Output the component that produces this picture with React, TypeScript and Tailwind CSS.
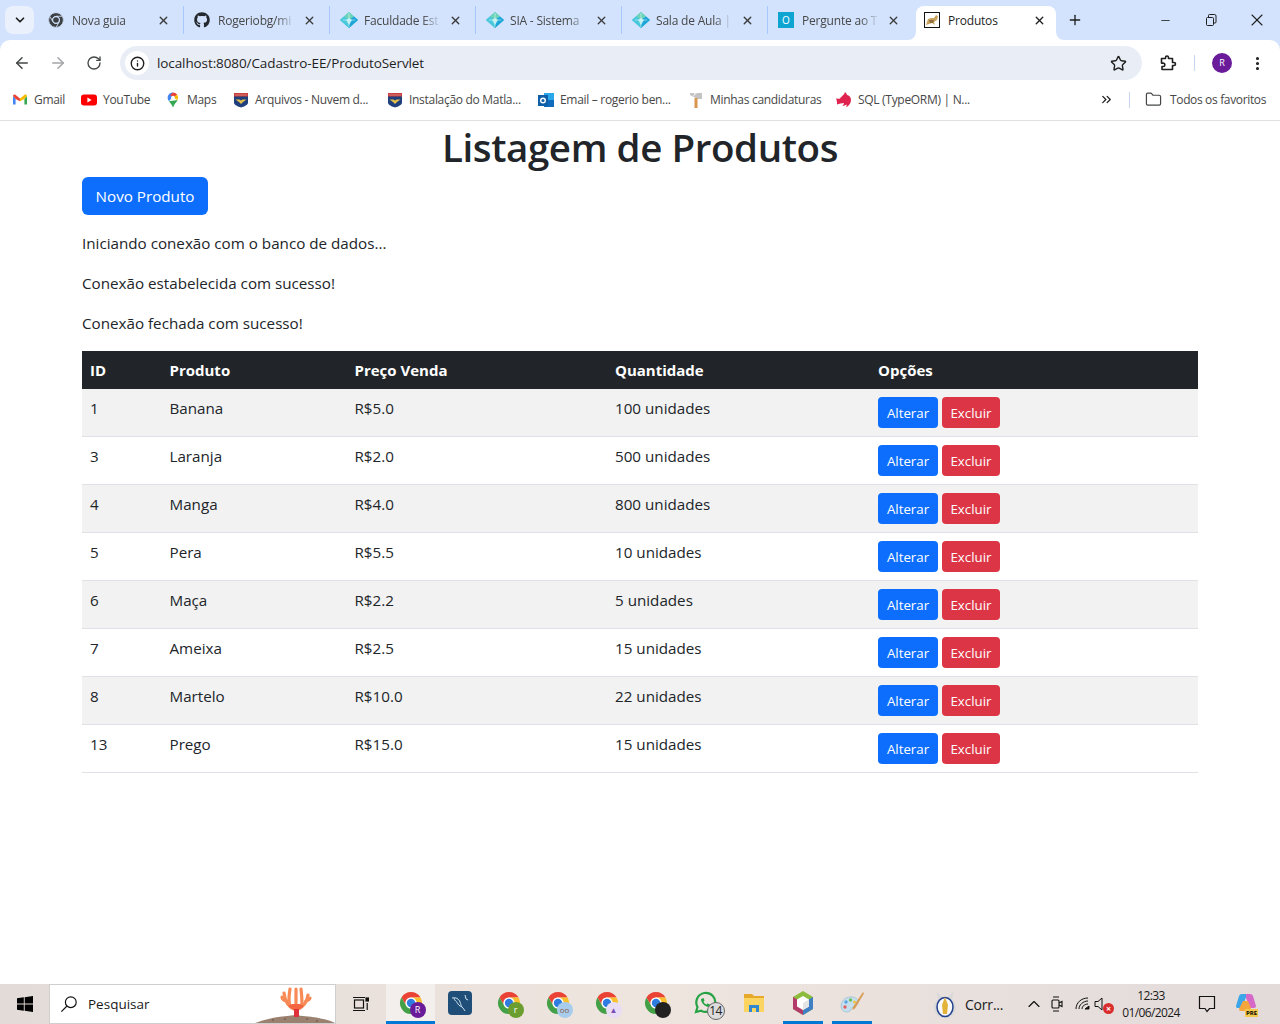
import { ArrowLeft, ArrowRight, ChevronDown, ChevronsRight, ChevronUp, EllipsisVertical, Folder, Info, Minus, Plus, RotateCw, Star, X } from "lucide-react";
import { FaGithub } from "react-icons/fa";
import type { ReactNode } from "react";

const ChromeLogo = ({ size = 16, gray = false }: { size?: number; gray?: boolean }) => (
  <svg width={size} height={size} viewBox="0 0 24 24">
    <g stroke={gray ? "#d3e3fd" : "none"} strokeWidth={gray ? 1 : 0}>
      <path d="M2.47 6.5A11 11 0 0 1 21.53 6.5H12A5.5 5.5 0 0 0 7.24 14.75Z" fill={gray ? "#3c4043" : "#ea4335"} />
      <path d="M21.53 6.5A11 11 0 0 1 12 23L16.76 14.75A5.5 5.5 0 0 0 12 6.5Z" fill={gray ? "#3c4043" : "#fbc02d"} />
      <path d="M12 23A11 11 0 0 1 2.47 6.5L7.24 14.75A5.5 5.5 0 0 0 16.76 14.75Z" fill={gray ? "#3c4043" : "#43a047"} />
    </g>
    <circle cx="12" cy="12" r="5.5" fill={gray ? "#d3e3fd" : "#fff"} />
    <circle cx="12" cy="12" r="4.2" fill={gray ? "#3c4043" : "#2f7de1"} />
  </svg>
);

const Diamond = () => (
  <svg width="18" height="16" viewBox="0 0 18 16">
    <path d="M9 0l9 8-9 8-9-8z" fill="#3fc4d6" />
    <path d="M9 0l5 4.500-5 3.500-5-3.500z" fill="#6fd3b8" />
    <path d="M9 8l5-3.500L18 8l-9 8z" fill="#1fa6d8" />
    <path d="M9 8 4 4.500 0 8l9 8z" fill="#48c8dc" />
    <path d="M6 8l3-2 3 2-3 5z" fill="#b5ecef" />
    <path d="M3 8h12M9 1v14" stroke="#e8fbfb" strokeWidth="0.500" />
  </svg>
);

const OBox = () => (
  <div className="flex h-4 w-4 items-center justify-center bg-[#0ea5d3] text-[10px] leading-none text-white">O</div>
);

const TomcatIcon = () => (
  <svg width="16" height="16" viewBox="0 0 16 16">
    <rect x="0.500" y="0.500" width="15" height="15" fill="#fff" stroke="#111" />
    <path d="M2 13l2-6 3-1 3 0 2-3 2 1-1 4-3 2 1 3-3-2-3 1z" fill="#c9a25e" />
    <path d="M5 8l5 0-1 3-3 0z" fill="#8f6f3a" />
  </svg>
);

const GmailIcon = () => (
  <svg width="16" height="16" viewBox="0 0 16 16">
    <path d="M1 4v8.500h2.600V7L1 4z" fill="#4285f4" />
    <path d="M12.400 12.500H15V4l-2.600 3z" fill="#34a853" />
    <path d="M1 4c0-1.300 1.500-2 2.400-1.200L8 6.600l-.1 2.600L3.600 7 1 4z" fill="#ea4335" />
    <path d="M15 4c0-1.300-1.500-2-2.400-1.200L8 6.600v2.600L12.400 7 15 4z" fill="#fbbc04" />
  </svg>
);

const YoutubeIcon = () => (
  <svg width="16" height="16" viewBox="0 0 16 16">
    <rect x="0" y="2.500" width="16" height="11" rx="3" fill="#f00" />
    <path d="M6.400 5.500v5L10.600 8z" fill="#fff" />
  </svg>
);

const MapsIcon = () => (
  <svg width="16" height="16" viewBox="0 0 16 16">
    <path d="M8 0.500a5.300 5.300 0 0 0-4 8.800L8 4.600z" fill="#4285f4" />
    <path d="M8 .5a5.300 5.300 0 0 1 4.100 1.900L9 6 5 3z" fill="#ea4335" />
    <path d="M12.100 2.400A5.300 5.300 0 0 1 12.600 8L8 5.800z" fill="#fbbc04" />
    <path d="M4 9.300 12.600 8C11.600 10.400 9 12 8 15.500 7.400 13.500 5.400 11 4 9.300z" fill="#34a853" />
    <circle cx="8" cy="5.600" r="1.900" fill="#fff" />
  </svg>
);

const ShieldIcon = () => (
  <svg width="16" height="16" viewBox="0 0 16 16">
    <path d="M1 1h14v9.500c0 2.500-4 4-7 5-3-1-7-2.500-7-5z" fill="#1f3f7d" />
    <rect x="1" y="1" width="14" height="3.500" fill="#c8403f" />
    <path d="M2.500 3h11" stroke="#f0d9d9" strokeWidth="0.800" strokeDasharray="1 1" />
    <path d="M2.500 7.500h4l1.500 1 1.500-1h4l-3.500 2.500L8 12 6 10z" fill="#e5c04b" />
  </svg>
);

const OutlookIcon = () => (
  <svg width="16" height="16" viewBox="0 0 16 16">
    <rect x="6" y="1" width="10" height="14" fill="#28a8ea" />
    <rect x="6" y="8" width="10" height="7" fill="#0f6cbd" />
    <rect x="0" y="3" width="10" height="11" fill="#0f5ea8" />
    <circle cx="5" cy="8.500" r="2.300" fill="none" stroke="#fff" strokeWidth="1.400" />
  </svg>
);

const HammerIcon = () => (
  <svg width="16" height="16" viewBox="0 0 16 16">
    <path d="M2 1h12v6H9.500L2 3z" fill="#c4c4c4" />
    <path d="M6 1h3L5 5z" fill="#e8e8e8" />
    <rect x="6.500" y="6" width="3" height="10" fill="#d9964e" />
  </svg>
);

const NestIcon = () => (
  <svg width="16" height="16" viewBox="0 0 16 16">
    <path d="M9 0c1 1 2 2 2 3 2 .4 4 2 4 5 0 3-2 6-5 7.500 .6-1 .8-2 .4-3-1 1-2.400 1.500-4 1 1-.6 1.500-1.500 1.500-2.500C6 11.600 3 11.400 1 12.500 1.500 9.500 0 8 .5 6 2 7 3 7 4 6.500 5 4.500 8 3.500 9 0z" fill="#e0234e" />
  </svg>
);

const RestoreIcon = () => (
  <svg width="12" height="12" viewBox="0 0 12 12" fill="none" stroke="#1f1f1f" strokeWidth="1">
    <rect x="1.500" y="3.500" width="7" height="8" rx="1" />
    <path d="M3.500 3.500V1.500a1 1 0 0 1 1-1h5a1.500 1.500 0 0 1 1.500 1.500v6a1 1 0 0 1-1 1H8.500" />
  </svg>
);

const PuzzleIcon = () => (
  <svg width="18" height="18" viewBox="0 0 18 18" fill="none" stroke="#1f1f1f" strokeWidth="1.600" strokeLinejoin="round">
    <path d="M2.500 4.500H6.500V3.500a1.500 1.500 0 0 1 3 0V4.500H13.500V8.500H15a1.500 1.500 0 0 1 0 3H13.500V15.500H3V12.500H4.200a1.700 1.700 0 0 0 0-3.400H2.500z" />
  </svg>
);

type TabData = { title: string; icon: ReactNode };

const tabs: TabData[] = [
  { title: "Nova guia", icon: <ChromeLogo gray /> },
  { title: "Rogeriobg/mi", icon: <FaGithub size={16} color="#24292f" /> },
  { title: "Faculdade Est", icon: <Diamond /> },
  { title: "SIA - Sistema", icon: <Diamond /> },
  { title: "Sala de Aula |", icon: <Diamond /> },
  { title: "Pergunte ao T", icon: <OBox /> },
];

const bookmarks = [
  { title: "Gmail", icon: <GmailIcon />, width: "w-[69px]" },
  { title: "YouTube", icon: <YoutubeIcon />, width: "w-[84px]" },
  { title: "Maps", icon: <MapsIcon />, width: "w-[68px]" },
  { title: "Arquivos - Nuvem d...", icon: <ShieldIcon />, width: "w-[154px]" },
  { title: "Instalação do Matla...", icon: <ShieldIcon />, width: "w-[151px]" },
  { title: "Email – rogerio ben...", icon: <OutlookIcon />, width: "w-[150px]" },
  { title: "Minhas candidaturas", icon: <HammerIcon />, width: "w-[148px]" },
  { title: "SQL (TypeORM) | N...", icon: <NestIcon />, width: "w-[150px]" },
];

const produtos = [
  { id: 1, nome: "Banana", preco: "R$5.0", qtd: "100 unidades" },
  { id: 3, nome: "Laranja", preco: "R$2.0", qtd: "500 unidades" },
  { id: 4, nome: "Manga", preco: "R$4.0", qtd: "800 unidades" },
  { id: 5, nome: "Pera", preco: "R$5.5", qtd: "10 unidades" },
  { id: 6, nome: "Maça", preco: "R$2.2", qtd: "5 unidades" },
  { id: 7, nome: "Ameixa", preco: "R$2.5", qtd: "15 unidades" },
  { id: 8, nome: "Martelo", preco: "R$10.0", qtd: "22 unidades" },
  { id: 13, nome: "Prego", preco: "R$15.0", qtd: "15 unidades" },
];

const TabStrip = () => (
  <div className="flex h-10 items-center bg-[#d3e3fd] pl-[5px]">
    <div className="mr-[3px] flex h-7 w-[29px] items-center justify-center rounded-lg bg-[#eaf1fd]">
      <ChevronDown size={14} strokeWidth={3} color="#1f1f1f" />
    </div>
    {tabs.map((tab, i) => (
      <div key={tab.title} className={`flex h-7 w-[146px] items-center ${i === 0 ? "pl-[11px]" : "border-l border-[#a8c7fa] pl-[10px]"}`}>
        <div className="flex w-6 shrink-0 items-center">{tab.icon}</div>
        <span className="w-[81px] overflow-hidden whitespace-pre pt-px text-[12px] tracking-[-0.2px] text-[#474747] [mask-image:linear-gradient(to_right,black_72%,transparent_95%)]">
          {tab.title}
        </span>
        <X size={13} strokeWidth={2.5} color="#3c3c3c" className="ml-[4px] shrink-0" />
      </div>
    ))}
    <div className="relative ml-[3px] mt-1.5 flex h-[34px] w-[140px] items-center self-start rounded-t-lg bg-white pb-1.5 pl-2">
      <svg className="absolute bottom-0 left-[-8px]" width="8" height="8" viewBox="0 0 8 8"><path d="M0 8a8 8 0 0 0 8-8v8z" fill="#fff" /></svg>
      <svg className="absolute bottom-0 right-[-8px]" width="8" height="8" viewBox="0 0 8 8"><path d="M8 8a8 8 0 0 1-8-8v8z" fill="#fff" /></svg>
      <div className="flex w-6 shrink-0 items-center"><TomcatIcon /></div>
      <span className="w-[85px] pt-px text-[12px] tracking-[-0.2px] text-[#1f1f1f]">Produtos</span>
      <X size={13} strokeWidth={2.5} color="#1f1f1f" className="shrink-0" />
    </div>
    <Plus size={16} strokeWidth={2} color="#1f1f1f" className="ml-[11px]" />
    <div className="ml-auto flex h-full">
      <div className="flex w-[46px] items-center justify-center"><Minus size={13} strokeWidth={1.5} color="#1f1f1f" /></div>
      <div className="flex w-[46px] items-center justify-center"><RestoreIcon /></div>
      <div className="flex w-[46px] items-center justify-center"><X size={20} strokeWidth={1.3} color="#1f1f1f" /></div>
    </div>
  </div>
);

const Toolbar = () => (
  <div className="bg-[#d3e3fd]">
    <div className="flex h-10 items-center rounded-t-[10px] bg-white pl-[13px] pt-1.5">
      <ArrowLeft size={18} strokeWidth={2} color="#444746" />
      <ArrowRight size={18} strokeWidth={2} color="#a3a5a6" className="ml-[18px]" />
      <RotateCw size={16} strokeWidth={2} color="#444746" className="ml-[19px]" />
      <div className="ml-[18px] flex h-[34px] w-[1022px] items-center rounded-full bg-[#e9eef6] pl-[5px]">
        <div className="flex h-6 w-6 items-center justify-center rounded-full bg-white">
          <Info size={15} strokeWidth={2.2} color="#1f1f1f" />
        </div>
        <span className="ml-2 text-[13.5px] tracking-[-0.1px] text-[#1f1f1f]">
          localhost:8080/Cadastro-EE/ProdutoServlet
        </span>
        <Star size={17} strokeWidth={2} color="#1f1f1f" className="ml-auto mr-[15px]" />
      </div>
      <div className="ml-[17px]"><PuzzleIcon /></div>
      <div className="ml-[17px] h-4 w-px bg-[#c7d7f0]" />
      <div className="ml-[17px] flex h-5 w-5 items-center justify-center rounded-full bg-[#6a1b9a] text-[9px] text-white">R</div>
      <EllipsisVertical size={17} strokeWidth={2.4} color="#1f1f1f" className="ml-[17px]" />
    </div>
  </div>
);

const BookmarksBar = () => (
  <div className="flex h-[41px] items-center border-b border-[#e0e0e0] bg-white pb-px pl-3 text-[12px] tracking-[-0.3px] text-[#474747]">
    {bookmarks.map((b) => (
      <div key={b.title} className={`flex items-center ${b.width}`}>
        <div className="flex w-[22px] shrink-0">{b.icon}</div>
        <span className="whitespace-nowrap">{b.title}</span>
      </div>
    ))}
    <ChevronsRight size={15} strokeWidth={2} color="#1f1f1f" className="ml-[113px]" />
    <div className="ml-[15px] h-4 w-px bg-[#c7d7f0]" />
    <Folder size={17} strokeWidth={1.7} color="#444746" className="ml-[15px]" />
    <span className="ml-2 whitespace-nowrap tracking-[-0.35px]">Todos os favoritos</span>
  </div>
);

const ProdutosPage = () => (
  <main className="flex-1 bg-white px-[82px] text-[15.2px] leading-6 text-[#212529]">
    <h1 className="mb-[6px] mt-[2px] text-center text-[38.5px] font-semibold leading-[48px] tracking-[-0.4px]">Listagem de Produtos</h1>
    <button className="block h-[38px] w-[126px] rounded-md bg-[#0d6efd] text-white">Novo Produto</button>
    <p className="mt-4">Iniciando conexão com o banco de dados...</p>
    <p className="mt-4">Conexão estabelecida com sucesso!</p>
    <p className="mt-4">Conexão fechada com sucesso!</p>
    <table className="mt-4 w-full table-fixed border-collapse">
      <thead>
        <tr className="h-[38px] bg-[#212529] text-left text-[15px] text-white">
          <th className="w-[79.5px] px-2 font-bold">ID</th>
          <th className="w-[185px] px-2 font-bold">Produto</th>
          <th className="w-[260.5px] px-2 font-bold">Preço Venda</th>
          <th className="w-[263px] px-2 font-bold">Quantidade</th>
          <th className="px-2 font-bold">Opções</th>
        </tr>
      </thead>
      <tbody>
        {produtos.map((p, i) => (
          <tr key={p.id} className={`border-b border-[#dee2e6] ${i % 2 === 0 ? "bg-[#f2f2f2]" : "bg-white"}`}>
            <td className="px-2 pb-[9px] pt-[7px] align-top">{p.id}</td>
            <td className="px-2 pb-[9px] pt-[7px] align-top">{p.nome}</td>
            <td className="px-2 pb-[9px] pt-[7px] align-top">{p.preco}</td>
            <td className="px-2 pb-[9px] pt-[7px] align-top">{p.qtd}</td>
            <td className="p-2 align-top">
              <div className="flex gap-1">
                <button className="h-[31px] w-[60px] rounded bg-[#0d6efd] text-[13.3px] text-white">Alterar</button>
                <button className="h-[31px] w-[58px] rounded bg-[#dc3545] text-[13.3px] text-white">Excluir</button>
              </div>
            </td>
          </tr>
        ))}
      </tbody>
    </table>
  </main>
);

const WinLogo = () => (
  <svg width="16" height="16" viewBox="0 0 16 16" fill="#000">
    <path d="M0 2.300 6.800 1.300V7.600H0zM7.700 1.200 16 0V7.600H7.700zM0 8.400H6.800V14.700L0 13.700zM7.700 8.400H16V16L7.700 14.800z" />
  </svg>
);

const MysqlIcon = () => (
  <div className="flex h-6 w-6 items-center justify-center rounded-sm bg-[#1f4f78]">
    <svg width="20" height="20" viewBox="0 0 20 20" fill="none" stroke="#cfe0ee" strokeWidth="1">
      <path d="M2 5c4-1 7 1 8 4 1 2 1 5 3 6l2 3M4 5c0 3 3 3 4 6 1 2 3 2 4 3M15 2l1 4 2 1" />
    </svg>
  </div>
);

const ChromeBadge = ({ color, children }: { color: string; children?: ReactNode }) => (
  <div className="relative h-6 w-6">
    <ChromeLogo size={24} />
    <div className={`absolute bottom-[-3px] right-[-3px] flex h-4 w-4 items-center justify-center rounded-full text-[9px] text-white ${color}`}>
      {children}
    </div>
  </div>
);

const WhatsappIcon = () => (
  <div className="relative h-6 w-6">
    <svg width="24" height="24" viewBox="0 0 24 24" fill="none" stroke="#25a244" strokeWidth="2.200">
      <path d="M3 21l1.500-5A9.500 9.500 0 1 1 8 19.600z" />
      <path d="M8 8c0 4 4 8 8 8l1-2.500-2.500-1-1 1c-1.500-.5-2.500-1.500-3-3l1-1-1-2.500z" fill="#25a244" stroke="none" />
    </svg>
    <div className="absolute bottom-[-5px] right-[-8px] flex h-[18px] w-[18px] items-center justify-center rounded-full border border-[#666] bg-[#dcdcdc] text-[12px] leading-none tracking-[-0.5px] text-[#222]">14</div>
  </div>
);

const ExplorerIcon = () => (
  <svg width="22" height="20" viewBox="0 0 22 20">
    <path d="M1 1h8l2 2h10v4H1z" fill="#e7a92c" />
    <rect x="1" y="5" width="20" height="14" fill="#fcd462" />
    <path d="M6 19v-7h10v7h-3v-4H9v4z" fill="#2f88d0" />
  </svg>
);

const NetbeansIcon = () => (
  <svg width="22" height="24" viewBox="0 0 22 24">
    <path d="M11 0 21 6v12l-10 6L1 18V6z" fill="#8dbb3c" />
    <path d="M1 6l6 3.500 4 10.500v4L1 18z" fill="#b43a6b" />
    <path d="M21 6l-6 3.500L11 20v4l10-6z" fill="#3f7fc4" />
    <path d="M11 5l6 3.500v7L11 19l-6-3.500v-7z" fill="#fff" />
    <path d="M11 12l6-3.500v7L11 19z" fill="#e4e4e4" />
  </svg>
);

const PaintIcon = () => (
  <svg width="24" height="24" viewBox="0 0 24 24">
    <path d="M1 15C1 9 7 5 13 6c5 1 6 5 4 8-2 2-4 1-5 3s-2 4-5 4c-4 0-6-3-6-6z" fill="#c6dfee" stroke="#8fb3c8" strokeWidth="0.600" />
    <circle cx="6" cy="11" r="1.700" fill="#5aa6e0" />
    <circle cx="10.500" cy="9" r="1.700" fill="#6bbf59" />
    <circle cx="14.500" cy="11" r="1.500" fill="#f0c040" />
    <circle cx="5" cy="16" r="1.700" fill="#e06060" />
    <path d="M23 1l1 1.500-9 15-2.500 1.500.500-3z" fill="#d99c55" />
  </svg>
);

const CoralIcon = () => (
  <svg className="ml-auto self-end" width="80" height="37" viewBox="0 0 80 37">
    <path d="M0 37c8-3 20-6 32-7 6-1 10-1 16 0 12 1 24 3 32 7z" fill="#9b8270" />
    <g fill="#5f4a3c">
      <circle cx="18" cy="34" r="0.800" />
      <circle cx="30" cy="33" r="0.800" />
      <circle cx="52" cy="33" r="0.800" />
      <circle cx="62" cy="35" r="0.800" />
    </g>
    <g fill="none" stroke="#f88a55" strokeWidth="3.200" strokeLinecap="round">
      <path d="M41 24C41 16 41 10 41 3" />
      <path d="M41 24C36 22 30 18 29 7" />
      <path d="M41 24C46 22 52 18 53 9" />
      <path d="M35 20C33 14 34 10 35 3" />
      <path d="M47 20C47 14 47 10 46 3" />
      <path d="M31 15C28 14 27 12 27 11" />
      <path d="M51 15C54 14 55 13 55 12" />
    </g>
    <path d="M33 20C38 25 44 25 49 20L45 18H37z" fill="#f5653f" />
    <rect x="39" y="23" width="5" height="8" fill="#e0303a" />
  </svg>
);

const apps: { icon: ReactNode; active?: boolean; open?: boolean }[] = [
  { icon: <ChromeBadge color="bg-[#6a1b9a]">R</ChromeBadge>, active: true, open: true },
  { icon: <MysqlIcon /> },
  { icon: <ChromeBadge color="bg-[#6b9e2f]">r</ChromeBadge> },
  { icon: <ChromeBadge color="bg-[#a8cdec]"><span className="text-[8px] text-[#8a5a4a]">oo</span></ChromeBadge> },
  { icon: <ChromeBadge color="bg-[#e9dcf5]"><span className="text-[8px] text-[#7a4fb0]">▲</span></ChromeBadge> },
  { icon: <ChromeBadge color="bg-[#222]" /> },
  { icon: <WhatsappIcon /> },
  { icon: <ExplorerIcon /> },
  { icon: <NetbeansIcon />, open: true },
  { icon: <PaintIcon />, open: true },
];

const Taskbar = () => (
  <footer className="flex h-10 items-stretch bg-linear-to-r from-[#e2dbd7] via-[#efe5df] to-[#e2dbda] text-[#1a1a1a]">
    <div className="flex w-[49px] items-center justify-center"><WinLogo /></div>
    <div className="flex w-[287px] items-center overflow-hidden border-x border-y border-[#cfcfcf] bg-white pl-[10px]">
      <svg width="18" height="18" viewBox="0 0 20 20" fill="none" stroke="#111" strokeWidth="1.300">
        <circle cx="12" cy="8" r="6" />
        <path d="M7.500 12.500 1.500 18.500" />
      </svg>
      <span className="ml-[10px] text-[13.5px]">Pesquisar</span>
      <CoralIcon />
    </div>
    <div className="flex w-[50px] items-center justify-center">
      <svg width="16" height="18" viewBox="0 0 16 18" fill="none" stroke="#111" strokeWidth="1.200">
        <rect x="1.500" y="5" width="9" height="8" />
        <path d="M0 2.500h12M0 15.500h12" />
        <rect x="13" y="3" width="2.500" height="3" fill="#111" />
        <path d="M14.200 8v7" />
      </svg>
    </div>
    {apps.map((app, i) => (
      <div key={i} className={`flex w-[49px] flex-col items-center ${app.active ? "bg-[#f3efec]" : ""}`}>
        <div className="flex flex-1 items-center justify-center pt-px">{app.icon}</div>
        <div className={`h-[3px] ${app.active ? "w-full" : "w-10"} ${app.open ? "bg-[#0078d4]" : ""}`} />
      </div>
    ))}
    <div className="ml-[56px] flex w-[82px] items-center">
      <svg width="26" height="28" viewBox="0 0 26 28">
        <path d="M4 1l6 6h6l6-6-2 8a11 11 0 1 1-14 0z" fill="#d9d9d9" />
        <ellipse cx="13" cy="17" rx="8" ry="9.500" fill="#f8f8f8" stroke="#23408e" strokeWidth="1.500" />
        <path d="M13 7l3 8-1 9h-4l-1-9z" fill="#e2b23a" />
      </svg>
      <span className="ml-[7px] text-[14px] tracking-[-0.2px]">Corr...</span>
    </div>
    <div className="flex items-center">
      <ChevronUp size={20} strokeWidth={1.4} color="#111" className="ml-[10px]" />
      <svg className="ml-[6px]" width="14" height="18" viewBox="0 0 14 18" fill="none" stroke="#111" strokeWidth="1.100">
        <rect x="2" y="5" width="7" height="8" rx="1" />
        <path d="M9 8l3-1.500v5L9 10M3 2h6M3 16h6" />
      </svg>
      <svg className="ml-[11px]" width="16" height="16" viewBox="0 0 16 16" fill="none" stroke="#111" strokeWidth="1">
        <path d="M1 13C1 7 6 2 13 2M4 13c0-4 4-8 9-8M7 13c0-3 3-5 6-5" />
        <path d="M10 13h4v-3z" fill="#111" />
      </svg>
      <div className="relative ml-[3px] h-4 w-5">
        <svg width="12" height="16" viewBox="0 0 12 16" fill="none" stroke="#111" strokeWidth="1">
          <path d="M1 5.500h3L8 2v12l-4-3.500H1z" />
        </svg>
        <div className="absolute bottom-[-2px] right-0 flex h-[11px] w-[11px] items-center justify-center rounded-full bg-[#d92c2c] text-[9px] font-bold leading-none text-white">×</div>
      </div>
    </div>
    <div className="ml-px flex w-[72px] flex-col items-center justify-center text-[12px] leading-[17px] tracking-[-0.6px]">
      <span>12:33</span>
      <span>01/06/2024</span>
    </div>
    <div className="ml-[11px] flex items-center">
      <svg width="18" height="18" viewBox="0 0 18 18" fill="none" stroke="#111" strokeWidth="1.200">
        <path d="M1.500 1.500h15v12h-5L9 16.500 7 13.500H1.500z" />
      </svg>
    </div>
    <div className="ml-[19px] flex items-center">
      <div className="relative h-[22px] w-[22px]">
        <svg width="22" height="20" viewBox="0 0 22 20">
          <path d="M7 1h5l-4 12a3 3 0 0 1-3 2H2A2 2 0 0 1 1 13L4 3a3 3 0 0 1 3-2z" fill="#3ba7e8" />
          <path d="M11 1h4a3 3 0 0 1 3 2l3 10a2 2 0 0 1-2 2h-4l-4-10z" fill="#d668c8" />
          <path d="M8 8h5l3 7a4 4 0 0 1-3 3H6a2 2 0 0 1-2-2z" fill="#f4a53c" />
        </svg>
        <div className="absolute bottom-[-2px] right-[-1px] bg-[#f2c94c] px-px text-[6px] font-bold leading-[8px] text-black">PRE</div>
      </div>
    </div>
  </footer>
);

export default function App() {
  return (
    <div className="flex h-[1024px] w-[1280px] flex-col overflow-hidden font-['Open_Sans',sans-serif]">
      <TabStrip />
      <Toolbar />
      <BookmarksBar />
      <ProdutosPage />
      <Taskbar />
    </div>
  );
}
